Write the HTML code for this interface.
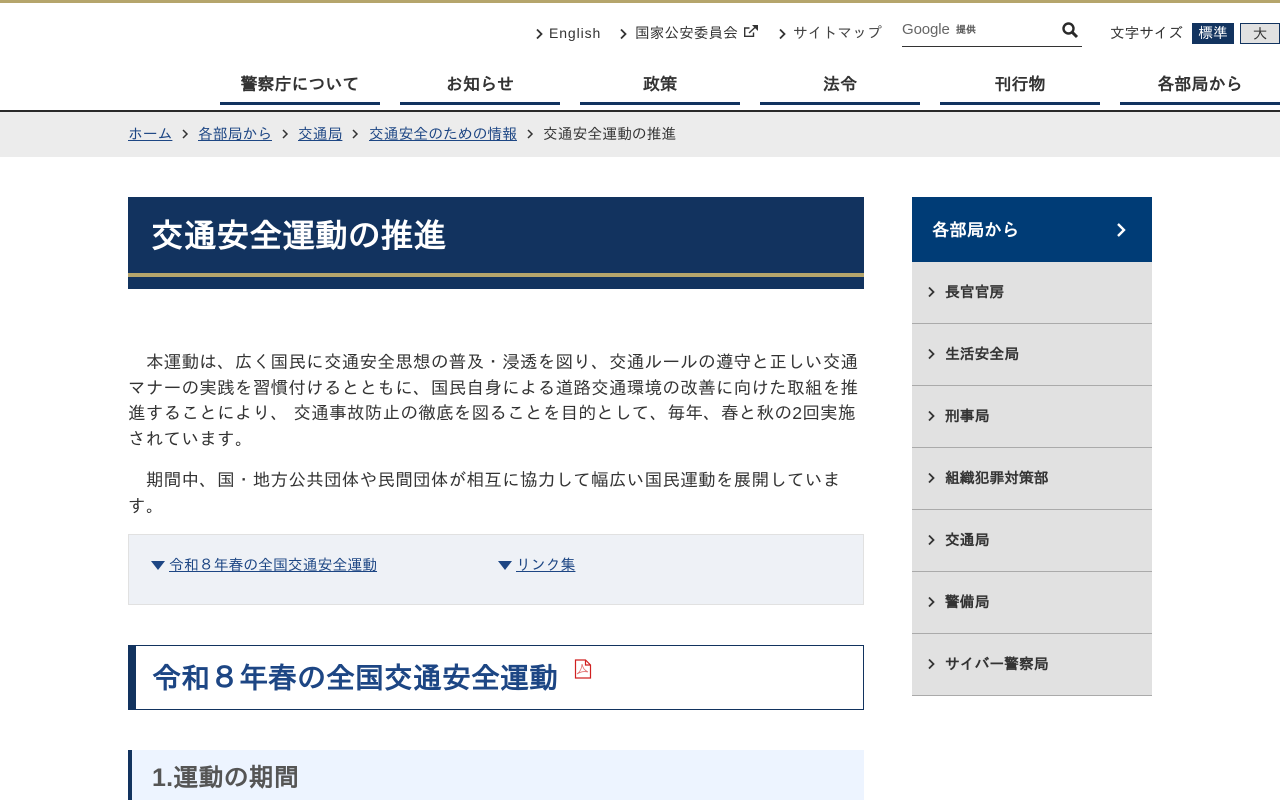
<!DOCTYPE html>
<html lang="ja"><head><meta charset="utf-8"><title>交通安全運動の推進</title>
<style>
*{box-sizing:border-box}
html,body{margin:0;padding:0;background:#fff}
body{width:1280px;height:800px;overflow:hidden;position:relative;font-family:"Liberation Sans","IPAGothic",sans-serif;color:#333}
.a{position:absolute;white-space:nowrap}
a{color:#1d4684;text-decoration:underline}
.chev{position:absolute;display:block;fill:none;stroke:#333;stroke-width:1.8}
.nav{position:absolute;top:64px;height:41px;width:160px;border-bottom:3px solid #12335f;text-align:center;font-size:17px;font-weight:bold;line-height:41px;color:#333}
.side{position:absolute;left:912px;width:240px;height:62px;background:#e1e1e1;border-bottom:1px solid #aaa;font-size:14.800px;font-weight:bold;line-height:62px;padding-left:33px;color:#333}
.p{left:128px;font-size:17.600px;letter-spacing:.22px;line-height:26px;height:26px;color:#333}
.bc{top:126px;font-size:14.800px;line-height:18px}
</style></head><body>
<div class="a" style="left:0;top:0;width:1280px;height:3px;background:#b5a56c"></div>

<svg class="chev" style="left:535px;top:28px" width="9" height="12" viewBox="0 0 9 12"><path d="M2 1.500 6.500 6 2 10.500"/></svg>
<div class="a" style="left:549px;top:24px;font-size:14px;line-height:18px;letter-spacing:.9px">English</div>
<svg class="chev" style="left:619px;top:28px" width="9" height="12" viewBox="0 0 9 12"><path d="M2 1.500 6.500 6 2 10.500"/></svg>
<div class="a" style="left:635px;top:25px;font-size:14.700px;line-height:18px">国家公安委員会</div>
<svg class="a" style="left:743px;top:24px" width="16" height="15" viewBox="0 0 16 15" fill="none" stroke="#333" stroke-width="1.400"><path d="M10.500 8.500v3.800H1.700V4H6.500"/><path d="M6 9 13 2.500"/><path d="M9 1h6v6z" fill="#333" stroke="none"/></svg>
<svg class="chev" style="left:778px;top:28px" width="9" height="12" viewBox="0 0 9 12"><path d="M2 1.500 6.500 6 2 10.500"/></svg>
<div class="a" style="left:793px;top:25px;font-size:14.800px;line-height:18px;color:#444">サイトマップ</div>

<div class="a" style="left:902px;top:20px;font-size:15px;line-height:20px;color:#666;letter-spacing:-.1px">Google</div>
<div class="a" style="left:956px;top:24px;font-size:10px;line-height:14px;color:#555;font-weight:bold">提供</div>
<div class="a" style="left:902px;top:46px;width:180px;height:1px;background:#333"></div>
<svg class="a" style="left:1061px;top:21px" width="18" height="18" viewBox="0 0 18 18" fill="none" stroke="#2a2a2a"><circle cx="7.500" cy="7.500" r="5" stroke-width="2.400"/><path d="M11.300 11.300 16 16" stroke-width="3"/></svg>
<div class="a" style="left:1110px;top:25px;font-size:14.600px;line-height:18px">文字サイズ</div>
<div class="a" style="left:1192px;top:23px;width:42px;height:21px;background:#12335f;color:#fff;font-size:14.600px;line-height:23px;text-align:center">標準</div>
<div class="a" style="left:1240px;top:23px;width:40px;height:21px;background:#e1e1e1;border:1px solid #12335f;color:#333;font-size:14.600px;line-height:22px;text-align:center">大</div>

<div class="nav" style="left:220px">警察庁について</div>
<div class="nav" style="left:400px">お知らせ</div>
<div class="nav" style="left:580px">政策</div>
<div class="nav" style="left:760px">法令</div>
<div class="nav" style="left:940px">刊行物</div>
<div class="nav" style="left:1120px">各部局から</div>
<div class="a" style="left:0;top:110px;width:1280px;height:2px;background:#2a2a2a"></div>
<div class="a" style="left:0;top:112px;width:1280px;height:45px;background:#ececec"></div>

<div class="a bc" style="left:128px"><a href="#">ホーム</a></div>
<svg class="chev" style="left:181px;top:128px;stroke-width:1.500" width="9" height="12" viewBox="0 0 9 12"><path d="M2 2 6 6 2 10"/></svg>
<div class="a bc" style="left:198px"><a href="#">各部局から</a></div>
<svg class="chev" style="left:281px;top:128px;stroke-width:1.500" width="9" height="12" viewBox="0 0 9 12"><path d="M2 2 6 6 2 10"/></svg>
<div class="a bc" style="left:298px"><a href="#">交通局</a></div>
<svg class="chev" style="left:351px;top:128px;stroke-width:1.500" width="9" height="12" viewBox="0 0 9 12"><path d="M2 2 6 6 2 10"/></svg>
<div class="a bc" style="left:369px"><a href="#">交通安全のための情報</a></div>
<svg class="chev" style="left:526px;top:128px;stroke-width:1.500" width="9" height="12" viewBox="0 0 9 12"><path d="M2 2 6 6 2 10"/></svg>
<div class="a bc" style="left:543px;color:#333">交通安全運動の推進</div>

<div class="a" style="left:128px;top:197px;width:736px;height:92px;background:#12335f"></div>
<div class="a" style="left:128px;top:273px;width:736px;height:4px;background:#b5a56c"></div>
<div class="a" style="left:151px;top:215px;font-size:32.800px;line-height:42px;font-weight:bold;color:#fff">交通安全運動の推進</div>

<div class="a p" style="top:349px;">　本運動は、広く国民に交通安全思想の普及・浸透を図り、交通ルールの遵守と正しい交通</div>
<div class="a p" style="top:375px;">マナーの実践を習慣付けるとともに、国民自身による道路交通環境の改善に向けた取組を推</div>
<div class="a p" style="top:400px;">進することにより、 交通事故防止の徹底を図ることを目的として、毎年、春と秋の2回実施</div>
<div class="a p" style="top:426px;">されています。</div>
<div class="a p" style="top:467px;">　期間中、国・地方公共団体や民間団体が相互に協力して幅広い国民運動を展開していま</div>
<div class="a p" style="top:493px;">す。</div>

<div class="a" style="left:128px;top:534px;width:736px;height:71px;background:#eef1f6;border:1px solid #e1e1e1"></div>
<svg class="a" style="left:151px;top:561px" width="14" height="9" viewBox="0 0 14 9"><path d="M0 0h14L7 9z" fill="#1d4684"/></svg>
<div class="a" style="left:169px;top:557px;font-size:14.860px;line-height:18px"><a href="#">令和８年春の全国交通安全運動</a></div>
<svg class="a" style="left:498px;top:561px" width="14" height="9" viewBox="0 0 14 9"><path d="M0 0h14L7 9z" fill="#1d4684"/></svg>
<div class="a" style="left:516px;top:557px;font-size:14.860px;line-height:18px"><a href="#">リンク集</a></div>

<div class="a" style="left:128px;top:645px;width:736px;height:65px;background:#fff;border:1px solid #12335f;border-left:8px solid #12335f"></div>
<div class="a" style="left:152px;top:660px;font-size:29px;line-height:38px;font-weight:bold;color:#1d4684">令和８年春の全国交通安全運動</div>
<svg class="a" style="left:574px;top:659px" width="18" height="20" viewBox="0 0 18 20" fill="none" stroke="#d02020" stroke-width="1.200"><path d="M1.500 1h10l5 5v13h-15z"/><path d="M11.500 1v5h5"/><path d="M8 5c1 4 2 6 6 8M8 5c0 4-2 8-5 10M3 15c3-2 7-3 11-2" stroke-width=".8" stroke="#e07070"/></svg>

<div class="a" style="left:128px;top:750px;width:736px;height:50px;background:#edf4ff;border-left:4px solid #12335f"></div>
<div class="a" style="left:152px;top:762px;font-size:25px;line-height:32px;font-weight:bold;color:#555;letter-spacing:.2px">1.運動の期間</div>

<div class="a" style="left:912px;top:197px;width:240px;height:65px;background:#003c76"></div>
<div class="a" style="left:932px;top:219px;font-size:17.400px;line-height:23px;font-weight:bold;color:#fff">各部局から</div>
<svg class="a" style="left:1115px;top:222px" width="14" height="16" viewBox="0 0 14 16" fill="none" stroke="#fff" stroke-width="2.400"><path d="M3 2 9 8 3 14"/></svg>
<div class="side" style="top:262px">長官官房</div>
<div class="side" style="top:324px">生活安全局</div>
<div class="side" style="top:386px">刑事局</div>
<div class="side" style="top:448px">組織犯罪対策部</div>
<div class="side" style="top:510px">交通局</div>
<div class="side" style="top:572px">警備局</div>
<div class="side" style="top:634px">サイバー警察局</div>
<svg class="chev" style="left:927px;top:286px" width="9" height="12" viewBox="0 0 9 12"><path d="M2 1.500 6.500 6 2 10.500"/></svg>
<svg class="chev" style="left:927px;top:348px" width="9" height="12" viewBox="0 0 9 12"><path d="M2 1.500 6.500 6 2 10.500"/></svg>
<svg class="chev" style="left:927px;top:410px" width="9" height="12" viewBox="0 0 9 12"><path d="M2 1.500 6.500 6 2 10.500"/></svg>
<svg class="chev" style="left:927px;top:472px" width="9" height="12" viewBox="0 0 9 12"><path d="M2 1.500 6.500 6 2 10.500"/></svg>
<svg class="chev" style="left:927px;top:534px" width="9" height="12" viewBox="0 0 9 12"><path d="M2 1.500 6.500 6 2 10.500"/></svg>
<svg class="chev" style="left:927px;top:596px" width="9" height="12" viewBox="0 0 9 12"><path d="M2 1.500 6.500 6 2 10.500"/></svg>
<svg class="chev" style="left:927px;top:658px" width="9" height="12" viewBox="0 0 9 12"><path d="M2 1.500 6.500 6 2 10.500"/></svg>
</body></html>
